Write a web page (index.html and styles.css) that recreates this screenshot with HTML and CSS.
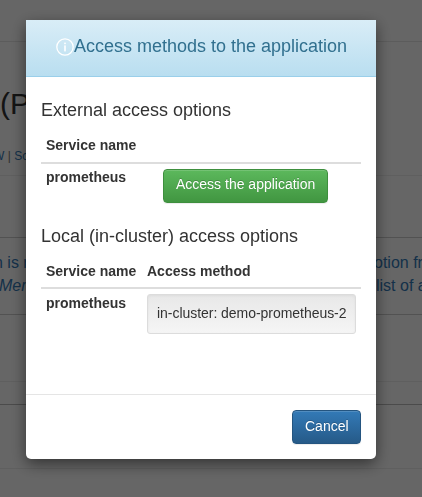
FILE: index.html
```
<!DOCTYPE html>
<html lang="en">
<head>
<meta charset="utf-8">
<title>Access methods to the application</title>
<link rel="stylesheet" href="styles.css">
</head>
<body>
<div class="page">
  <div class="band band-nav"></div>
  <div class="band band-title">
    <h1>(P</h1>
    <p class="links"><a>W</a> | <a>Sc</a></p>
  </div>
  <div class="band band-tabs"></div>
  <div class="band band-info">
    <div class="line"><span class="l1">n is r</span><span class="r1">otion from</span></div>
    <div class="line"><em>Mem</em><span class="r2">list of al</span></div>
  </div>
  <div class="band band-a"></div>
  <div class="band band-b"></div>
  <div class="band band-c"></div>
</div>
<div class="backdrop">
  <div class="modal">
    <div class="modal-header">
      <svg class="icon" viewBox="0 0 18 18"><circle cx="9" cy="9" r="8.2"/><rect x="8.2" y="4.6" width="1.6" height="1.6"/><rect x="8.2" y="7.4" width="1.6" height="6"/></svg><h4>Access methods to the application</h4>
    </div>
    <div class="modal-body">
      <h4 class="sub">External access options</h4>
      <table>
        <thead><tr><th class="first">Service name</th><th></th></tr></thead>
        <tbody><tr><th>prometheus</th><td class="action"><button class="btn success">Access the application</button></td></tr></tbody>
      </table>
      <h4 class="sub second">Local (in-cluster) access options</h4>
      <table class="local">
        <thead><tr><th class="first">Service name</th><th>Access method</th></tr></thead>
        <tbody><tr><th>prometheus</th><td><div class="well">in-cluster: demo-prometheus-2</div></td></tr></tbody>
      </table>
    </div>
    <div class="modal-footer"><button class="btn primary">Cancel</button></div>
  </div>
</div>
</body>
</html>
```
FILE: styles.css
```
* { box-sizing: border-box; }
body { margin: 0; height: 497px; overflow: hidden; font: 14px/20px "Liberation Sans", Arial, sans-serif; color: #333; }
h1, h4, p { margin: 0; font-weight: 400; }
.page { height: 497px; overflow: hidden; background: #fff; }
.band { border-bottom: 1px solid #eee; overflow: hidden; white-space: nowrap; }
.band-nav { height: 42px; border-color: #e7e7e7; }
.band-title { height: 134px; padding-top: 44px; }
.band-title h1 { font-size: 30px; line-height: 36px; }
.links { margin: 24px 0 0 -7px; font-size: 12px; color: #777; }
.links a, .band-info { color: #337ab7; }
.band-tabs { height: 62px; border-color: #ccc; }
.band-info { height: 77px; padding-top: 13px; font-size: 16px; border-color: #ccc; }
.line { display: flex; justify-content: space-between; height: 23px; line-height: 23px; }
.line em { margin-left: -1px; }
.l1 { margin-left: -6px; }
.r1, .r2 { flex: none; width: 48px; }
.r2 { width: 46px; }
.band-a { height: 67px; }
.band-b { height: 23px; border-color: #bbb; }
.band-c { height: 64px; }
.backdrop { position: fixed; inset: 0; padding: 20px 0 0 26px; background: rgba(0, 0, 0, .6); }
.modal { display: flex; flex-direction: column; width: 350px; height: 439px; background: #fff; border-radius: 0 0 5px 5px; box-shadow: 0 5px 15px rgba(0, 0, 0, .5); }
.modal-header { display: flex; justify-content: center; height: 57px; padding: 15px 0 0 1px; background: linear-gradient(#d9edf7, #b9def0); border-bottom: 1px solid #9acfea; color: #31708f; }
.modal-header h4 { font-size: 18px; line-height: 22px; white-space: nowrap; }
.icon { width: 18px; height: 18px; margin-top: 3px; fill: #fff; }
.icon circle { fill: none; stroke: #fff; stroke-width: 1.3; }
.modal-body { flex: 1; padding: 22px 15px 0; }
.sub { height: 22px; font-size: 18px; line-height: 22px; white-space: nowrap; }
.second { margin-top: 17px; }
table { width: 320px; margin-top: 9px; border-collapse: separate; border-spacing: 0; table-layout: fixed; }
th, td { padding: 5px; text-align: left; vertical-align: top; }
thead th { height: 34px; border-bottom: 2px solid #ddd; }
tbody th { padding-top: 3px; }
.local thead th { height: 33px; }
.local tbody th { padding-top: 4px; }
.first { width: 101px; }
.action { padding-left: 21px; }
.btn { display: block; height: 34px; padding: 0 12px 3px; border: 1px solid; border-radius: 4px; color: #fff; font: 14px/29px "Liberation Sans", Arial, sans-serif; text-shadow: 0 -1px 0 rgba(0, 0, 0, .2); box-shadow: inset 0 1px 0 rgba(255, 255, 255, .15), 0 1px 1px rgba(0, 0, 0, .075); white-space: nowrap; }
.success { width: 165px; background: linear-gradient(#5cb85c, #419641); border-color: #3e8f3e; }
.primary { width: 69px; padding-bottom: 2px; background: linear-gradient(#337ab7, #265a88); border-color: #245580; }
.well { width: 209px; height: 40px; padding: 8px 9px; border: 1px solid #dcdcdc; border-radius: 3px; background: linear-gradient(#e8e8e8, #f5f5f5); box-shadow: inset 0 1px 3px rgba(0, 0, 0, .05), 0 1px 0 rgba(255, 255, 255, .1); white-space: nowrap; letter-spacing: -.04px; }
.modal-footer { display: flex; justify-content: flex-end; height: 65px; padding: 15px; border-top: 1px solid #e5e5e5; }
```
